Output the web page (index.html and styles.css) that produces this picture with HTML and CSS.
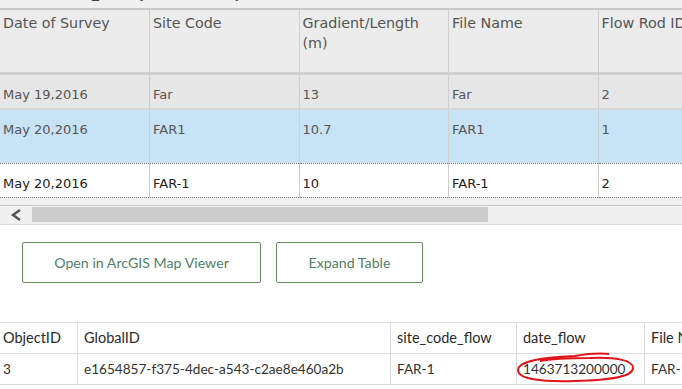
FILE: index.html
```html
<!DOCTYPE html>
<html lang="en">
<head>
<meta charset="UTF-8">
<title>Flow Survey</title>
<link rel="stylesheet" href="styles.css">
</head>
<body>
<div class="grid-panel">
    <div class="grid-title"><span>Flow_Survey (Flow Survey)</span></div>

    <!-- Attribute grid -->
    <div class="grid-scroll">
        <table class="grid">
            <thead>
                <tr>
                    <th>Date of Survey</th>
                    <th>Site Code</th>
                    <th>Gradient/Length (m)</th>
                    <th>File Name</th>
                    <th>Flow Rod ID</th>
                </tr>
            </thead>
            <tbody>
                <tr class="row-odd">
                    <td>May 19,2016</td><td>Far</td><td>13</td><td>Far</td><td>2</td>
                </tr>
                <tr class="row-selected">
                    <td>May 20,2016</td><td>FAR1</td><td>10.7</td><td>FAR1</td><td>1</td>
                </tr>
                <tr class="row-focus">
                    <td>May 20,2016</td><td>FAR-1</td><td>10</td><td>FAR-1</td><td>2</td>
                </tr>
            </tbody>
        </table>
    </div>

    <div class="hscroll">
        <span class="hscroll-arrow">
            <svg width="14" height="12" viewBox="0 0 14 12"><path d="M11 1 L4 6 L11 11" fill="none" stroke="#555" stroke-width="2.4"/></svg>
        </span>
        <span class="hscroll-track"><span class="hscroll-thumb"></span></span>
    </div>
</div>

<div class="actions">
    <button class="btn btn-map">Open in ArcGIS Map Viewer</button>
    <button class="btn btn-expand">Expand Table</button>
</div>

<!-- Related records -->
<div class="related">
    <table class="plain">
        <tr>
            <th class="c-oid">ObjectID</th>
            <th class="c-gid">GlobalID</th>
            <th class="c-site">site_code_flow</th>
            <th class="c-date">date_flow</th>
            <th>File Name</th>
        </tr>
        <tr>
            <td>3</td>
            <td>e1654857-f375-4dec-a543-c2ae8e460a2b</td>
            <td>FAR-1</td>
            <td class="marked">1463713200000
                <svg class="scribble" width="122" height="34" viewBox="0 0 122 34">
                    <path d="M94 3 C85 2 72 3 60 5 C30 6 3 10 3 19 C3 28 25 31 60 30 C95 29 118 26 118 17 C118 9 100 6 75 7 C55 7 35 8 25 10" fill="none" stroke="#e0141b" stroke-width="2"/>
                </svg>
            </td>
            <td>FAR-1</td>
        </tr>
    </table>
</div>
</body>
</html>
```

FILE: styles.css
```css
body {
    margin: 0;
    width: 682px;
    height: 389px;
    overflow: hidden;
    background: #fff;
    font-family: "DejaVu Sans", Verdana, sans-serif;
}

.grid-panel {
    background: #f0f0f0;
}

.grid-title {
    height: 8px;
    overflow: hidden;
    font-size: 14px;
    line-height: 16px;
    color: #444;
    padding-left: 60px;
    border-bottom: 2px solid #c8c8c8;
}

.grid-title span {
    display: block;
    margin-top: -15px;
}

.grid-scroll {
    overflow: hidden;
    width: 682px;
}

.grid {
    border-collapse: collapse;
    table-layout: fixed;
    width: 748px;
    color: #555;
}

.grid th {
    width: 149px;
    height: 63px;
    padding: 3px 3px 0;
    box-sizing: border-box;
    vertical-align: top;
    text-align: left;
    font-weight: normal;
    font-size: 14.3px;
    line-height: 20px;
    background: #ececec;
    border-right: 1px solid #cfcfcf;
    border-bottom: 3px solid #cfcfcf;
}

.grid td {
    padding: 11px 3px 0;
    vertical-align: top;
    font-size: 13px;
    line-height: 18px;
    border-right: 1px solid #cfcfcf;
}

.row-odd td {
    height: 36px;
    box-sizing: border-box;
    background: #e6e6e6;
    border-bottom: 2px solid #d6d6d6;
}

.row-selected td {
    height: 54px;
    box-sizing: border-box;
    background: #c8e3f6;
    border-bottom: 1px dotted #777;
}

.row-focus td {
    height: 34px;
    box-sizing: border-box;
    background: #fff;
    color: #222;
    border-bottom: 1px dotted #777;
}

.hscroll {
    display: flex;
    align-items: center;
    height: 16px;
    margin-top: 7px;
    padding: 1px 0;
    border-top: 1px solid #c8c8c8;
    border-bottom: 1px solid #dcdcdc;
    background: #f0f0f0;
}

.hscroll-arrow {
    display: flex;
    width: 32px;
    justify-content: center;
}

.hscroll-track {
    flex: 1;
    height: 15px;
}

.hscroll-thumb {
    display: block;
    width: 456px;
    height: 15px;
    background: #cdcdcd;
}

.actions {
    display: flex;
    gap: 15px;
    padding: 17px 0 0 22px;
}

.btn {
    height: 41px;
    padding: 0;
    background: #fff;
    border: 1px solid #6a8f62;
    border-radius: 2px;
    color: #4f7f6a;
    font-family: Lato, "Open Sans", sans-serif;
    font-size: 14.2px;
}

.btn-map {
    width: 239px;
}

.btn-expand {
    width: 147px;
}

.related {
    margin-top: 39px;
    width: 682px;
    overflow: hidden;
}

.plain {
    border-collapse: collapse;
    table-layout: fixed;
    width: 740px;
    font-family: Lato, "Open Sans", sans-serif;
    font-size: 14.5px;
    color: #333;
}

.plain th, .plain td {
    height: 30px;
    padding: 0 6px;
    text-align: left;
    font-weight: normal;
    white-space: nowrap;
    border: 1px solid #dcdcdc;
    border-left: none;
}

.plain td {
    font-size: 13.6px;
}

.plain th:first-child, .plain td:first-child {
    padding-left: 3px;
}

.plain th {
    color: #2b2b2b;
}

.c-oid { width: 68px; }
.c-gid { width: 300px; }
.c-site { width: 113px; }
.c-date { width: 115px; }

.marked {
    position: relative;
}

.scribble {
    position: absolute;
    left: -2px;
    top: -3px;
}
```
